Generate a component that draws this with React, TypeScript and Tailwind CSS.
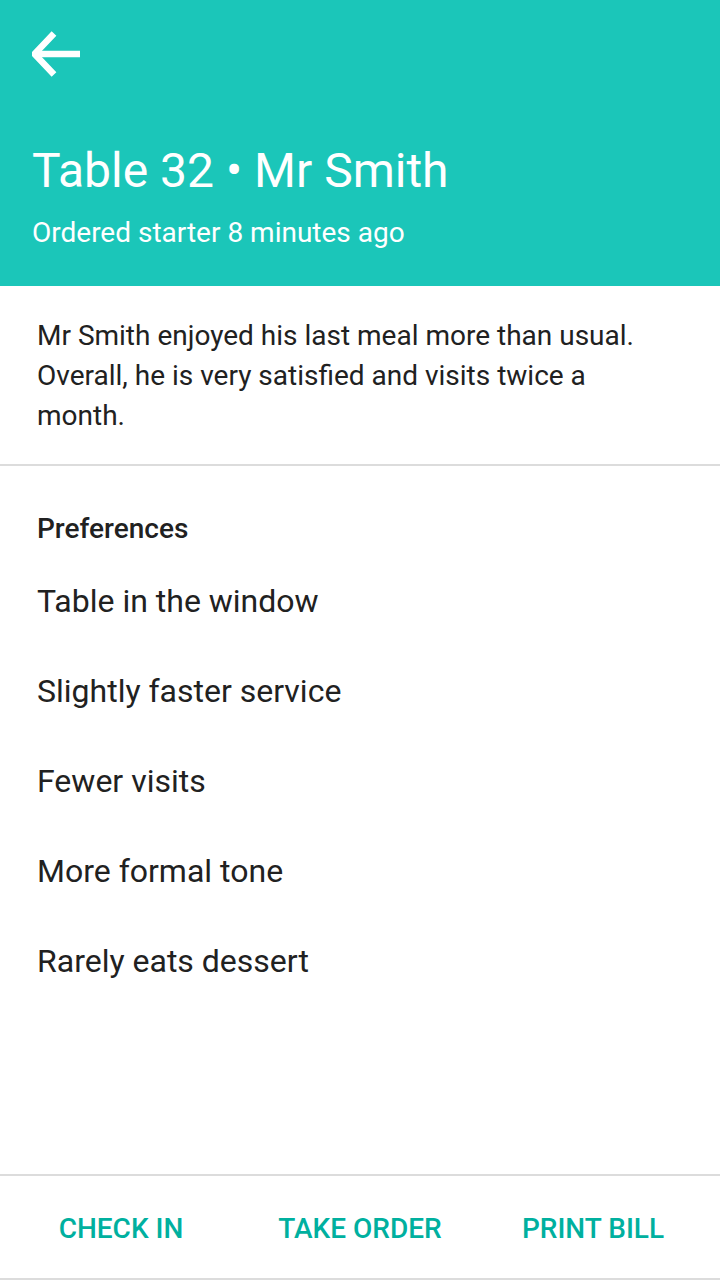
const preferences = [
  'Table in the window',
  'Slightly faster service',
  'Fewer visits',
  'More formal tone',
  'Rarely eats dessert',
]

const actions = ['CHECK IN', 'TAKE ORDER', 'PRINT BILL']

function BackArrow() {
  return (
    <svg width="48" height="48" viewBox="0 0 48 48" fill="none" className="block">
      <path d="M22 3.5 L2.5 24 L22 44.5" stroke="white" strokeWidth="6.5" />
      <path d="M4 24 H48" stroke="white" strokeWidth="6.5" />
    </svg>
  )
}

export default function App() {
  return (
    <div className="flex h-[1280px] w-[720px] flex-col bg-white font-['Roboto',sans-serif] text-[#212121]">
      {/* Header */}
      <header className="h-[286px] shrink-0 bg-[#1bc6b9] px-8 pt-[30px] text-white">
        <BackArrow />
        <h1 className="mt-[65px] text-[48px] leading-[56px] font-normal">Table 32 • Mr Smith</h1>
        <p className="mt-[17px] text-[28px] leading-[34px]">Ordered starter 8 minutes ago</p>
      </header>

      {/* Summary */}
      <section className="px-[37px] pt-[30px] pb-[28px]">
        <p className="w-[612px] text-[28px] leading-[40px]">
          Mr Smith enjoyed his last meal more than usual. Overall, he is very satisfied and visits twice a month.
        </p>
      </section>

      <div className="h-[2px] shrink-0 bg-[#dcdcdc]" />

      {/* Preferences */}
      <section className="px-[37px] pt-[47px]">
        <h2 className="text-[28px] leading-[32px] font-medium">Preferences</h2>
        <ul className="mt-[11px]">
          {preferences.map((item) => (
            <li key={item} className="text-[32px] leading-[90px]">
              {item}
            </li>
          ))}
        </ul>
      </section>

      <div className="flex-1" />

      {/* Actions */}
      <nav className="grid h-[106px] shrink-0 grid-cols-[242px_236px_230px] items-center border-y-2 border-[#dcdcdc] pt-[4px]">
        {actions.map((label) => (
          <button key={label} className="text-center text-[28px] font-medium text-[#00b09f]">
            {label}
          </button>
        ))}
      </nav>
    </div>
  )
}
